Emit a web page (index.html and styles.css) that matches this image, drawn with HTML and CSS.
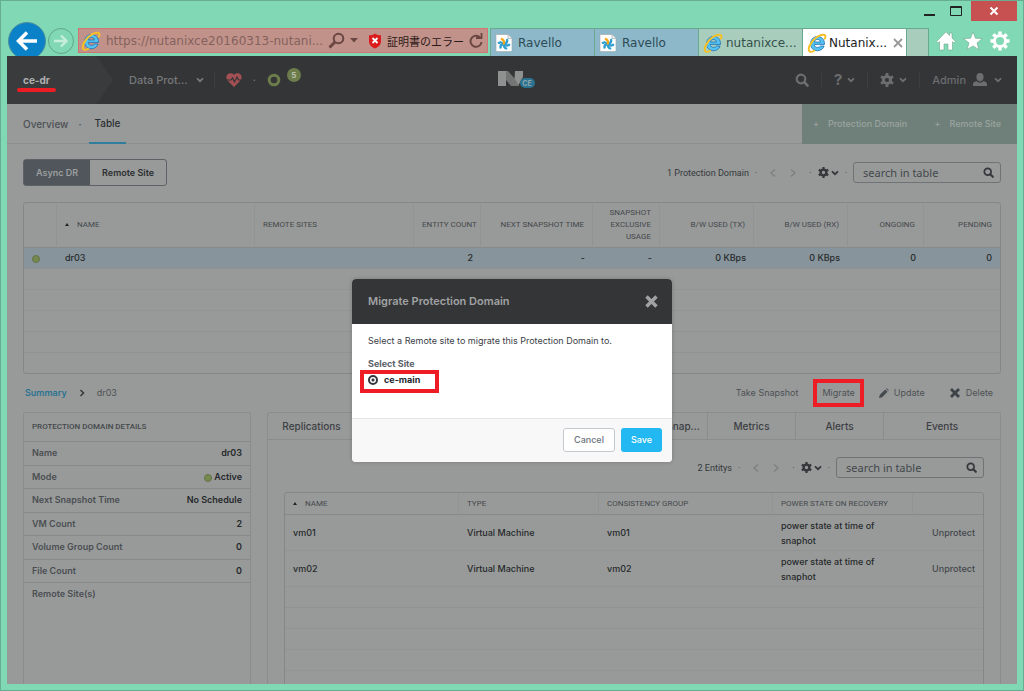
FILE: index.html
```html
<!DOCTYPE html>
<html lang="ja">
<head>
    <meta charset="UTF-8">
    <meta name="viewport" content="width=device-width, initial-scale=1.0">
    <title>Nutanix Web Console</title>
    <link rel="stylesheet" href="styles.css">
</head>
<body>

    <!-- Shared icons -->
    <svg class="sprite" width="0" height="0">
        <symbol id="ie" viewBox="0 0 20 20">
            <path d="M17.500 11.400H7.200c.2 2 1.500 3 3.300 3 1.400 0 2.400-.5 3-1.400h3.600c-.9 2.900-3.400 4.700-6.600 4.700-4 0-7-2.800-7-6.900S6.500 3.500 10.500 3.500c4.300 0 7.200 3.100 7 7.900zM7.300 9h6.300c-.3-1.600-1.400-2.500-3.100-2.500S7.700 7.400 7.300 9z" fill="#55c3f2" stroke="#1c6eb4" stroke-width=".8"/>
            <path d="M2.600 18.400C.4 16.200 3 9.800 8 5.600 12 2.200 17 .6 18.200 2.500c.5.800.2 2-.4 3.100" fill="none" stroke="#f6c026" stroke-width="2" stroke-linecap="round"/>
            <path d="M2.600 18.400c1 .9 3 .3 4.800-.9" fill="none" stroke="#f6c026" stroke-width="1.600" stroke-linecap="round"/>
        </symbol>
        <symbol id="ravello" viewBox="0 0 18 18">
            <path d="M1 .5h12l4 4v13H1z" fill="#fff" stroke="#9aa5a8" stroke-width=".6"/>
            <path d="M13 .5v4h4" fill="#e3e7e8" stroke="#9aa5a8" stroke-width=".6"/>
            <g fill="none" stroke="#2f9fd0" stroke-width="2.300" stroke-linecap="round">
                <path d="M8.500 10C7 8.500 5 8 3.800 9"/>
                <path d="M8.500 10c-2 .3-3.200 1.500-3 3.600"/>
                <path d="M9 10.200c-.3 2 .5 3.600 2.200 4.300"/>
                <path d="M9 10c1.500 1.600 3.600 1.900 5.200.8"/>
                <path d="M9 9.800c2-.3 3.300-1.800 3.200-3.800"/>
            </g>
            <path d="M8.800 9.500C9.300 7.500 8.500 5.800 6.800 5" fill="none" stroke="#f5a81c" stroke-width="2.300" stroke-linecap="round"/>
        </symbol>
        <symbol id="search" viewBox="0 0 14 14">
            <circle cx="6" cy="6" r="4.300" fill="none" stroke="currentColor" stroke-width="2.200"/>
            <path d="M9.200 9.200l3.300 3.300" stroke="currentColor" stroke-width="2.600" stroke-linecap="round"/>
        </symbol>
        <symbol id="gear" viewBox="0 0 14 14">
            <circle cx="7" cy="7" r="3.600" fill="none" stroke="currentColor" stroke-width="3"/>
            <path d="M7 0v2.500M7 11.500V14M1 3.500l2.100 1.200M10.900 9.300l2.100 1.200M1 10.500l2.100-1.200M10.900 4.700L13 3.500" stroke="currentColor" stroke-width="2.800"/>
        </symbol>
        <symbol id="down" viewBox="0 0 8 8">
            <path d="M1.500 2.800L4 5.200l2.500-2.400" fill="none" stroke="currentColor" stroke-width="1.800" stroke-linecap="round"/>
        </symbol>
        <symbol id="cross" viewBox="0 0 12 12">
            <path d="M2 2l8 8M10 2l-8 8" stroke="currentColor" stroke-width="2.800"/>
        </symbol>
        <symbol id="left" viewBox="0 0 8 10">
            <path d="M6 1.500L2 5l4 3.500" fill="none" stroke="currentColor" stroke-width="1.500"/>
        </symbol>
        <symbol id="right" viewBox="0 0 8 10">
            <path d="M2 1.500L6 5 2 8.500" fill="none" stroke="currentColor" stroke-width="1.500"/>
        </symbol>
    </svg>

    <div class="window">

        <!-- Title bar -->
        <div class="titlebar">
            <button class="win-btn" aria-label="Minimize"><svg width="12" height="12"><path d="M0 10h11" stroke="#222" stroke-width="2"/></svg></button>
            <button class="win-btn" aria-label="Maximize"><svg width="13" height="12"><path d="M.5 1.500h11v9H.5zM0 2.500h12" fill="none" stroke="#222"/></svg></button>
            <button class="win-btn win-close" aria-label="Close"><svg width="10" height="10"><path d="M1.500 1.500l7 7M8.500 1.500l-7 7" stroke="#fff" stroke-width="2"/></svg></button>
        </div>

        <!-- Browser bar -->
        <div class="browser">
            <button class="back" aria-label="Back"><svg width="22" height="22"><path d="M21 11H3M11 2.500L2.500 11l8.500 8.500" fill="none" stroke="#fff" stroke-width="3.500"/></svg></button>
            <button class="forward" aria-label="Forward"><svg width="14" height="14"><path d="M0 7h12M7 1.500L12.500 7 7 12.500" fill="none" stroke="#c7eedd" stroke-width="2.400"/></svg></button>
            <div class="address">
                <svg width="20" height="20"><use href="#ie"/></svg>
                <input class="url" type="text" aria-label="Address" value="https://nutanixce20160313-nutani...">
                <svg width="17" height="17" viewBox="0 0 17 17"><circle cx="10.500" cy="6.500" r="4.800" fill="none" stroke="#6a4743" stroke-width="2"/><path d="M7 10l-5.500 5.500" stroke="#6a4743" stroke-width="3"/></svg>
                <svg class="url-drop" width="8" height="5"><path d="M0 0h8L4 4.500z" fill="#6a4743"/></svg>
                <svg width="14" height="16" viewBox="0 0 14 16"><path d="M7 .5c2 1.500 4 1.800 6 1.800V8c0 4-2.500 6-6 7.500C3.500 14 1 12 1 8V2.300c2 0 4-.3 6-1.800z" fill="#dc1c1c"/><path d="M4.500 5l5 5M9.500 5l-5 5" stroke="#fff" stroke-width="1.800"/></svg>
                <span class="cert">証明書のエラー</span>
                <svg width="14" height="16" viewBox="0 0 14 16"><path d="M11 4.500A5.500 5.500 0 1 0 12.500 9" fill="none" stroke="#6a4743" stroke-width="2"/><path d="M7 5h5.500V0" fill="none" stroke="#6a4743" stroke-width="1.800"/></svg>
            </div>
            <div class="tabs">
                <a class="tab tab-blue" href="#"><svg width="18" height="18"><use href="#ravello"/></svg>Ravello</a>
                <a class="tab tab-blue" href="#"><svg width="18" height="18"><use href="#ravello"/></svg>Ravello</a>
                <a class="tab" href="#"><svg width="20" height="20"><use href="#ie"/></svg>nutanixce...</a>
                <a class="tab tab-active" href="#"><svg width="20" height="20"><use href="#ie"/></svg>Nutanix...<svg class="tab-close" width="10" height="10"><path d="M1 1l8 8M9 1L1 9" stroke="#999" stroke-width="1.800"/></svg></a>
                <button class="tab-new" aria-label="New tab"></button>
            </div>
            <div class="browser-tools">
                <button aria-label="Home"><svg width="20" height="20"><path d="M10 .8L.6 10.500l1.500 1.500L3.500 10.700V19H8v-6h4v6h4.500v-8.300l1.400 1.300 1.500-1.500-3.400-3.500V2h-2.500v2.500z" fill="#fff" stroke="#6fa78f" stroke-width=".6"/></svg></button>
                <button aria-label="Favorites"><svg width="20" height="20"><path d="M10 .8l2.500 6.500 6.900.3-5.400 4.300 1.900 6.800L10 14.900l-5.900 3.800L6 11.900.6 7.600l6.900-.3z" fill="#fff" stroke="#6fa78f" stroke-width=".6"/></svg></button>
                <button aria-label="Tools"><svg width="20" height="20"><circle cx="10" cy="10" r="5.500" fill="none" stroke="#fff" stroke-width="3"/><path d="M10 .5V4M10 16v3.500M.5 10H4M16 10h3.500M3.300 3.300l2.500 2.500M14.200 14.200l2.500 2.500M3.300 16.700l2.500-2.500M14.200 5.800l2.500-2.500" stroke="#fff" stroke-width="3.400"/></svg></button>
            </div>
        </div>

        <div class="app">

            <!-- Header -->
            <header class="header">
                <div class="cluster"><span class="cluster-name">ce-dr</span></div>
                <svg class="cluster-arrow" width="16" height="48" viewBox="0 0 16 48"><path d="M0 0l16 24L0 48z" fill="#3a3b3d"/></svg>
                <button class="page-menu">Data Prot...<svg width="8" height="8"><use href="#down"/></svg></button>
                <i class="divider"></i>
                <svg class="heart" width="16" height="14" viewBox="0 0 16 14"><path d="M8 14L1.500 7.500C-2 3 3-2.500 8 1.800 13-2.500 18 3 14.500 7.500z" fill="#a35054"/><path d="M0 7h5l1.500-2 2 4 2.500-5 1.500 3H16" fill="none" stroke="#343537" stroke-width="1.200"/></svg>
                <span class="dot">·</span>
                <svg class="ring" width="14" height="14"><circle cx="7" cy="7" r="4.800" fill="none" stroke="#6c7d4b" stroke-width="3"/></svg>
                <span class="badge">5</span>
                <div class="logo">
                    <svg width="38" height="18" viewBox="0 0 38 18">
                        <path d="M17 0h8v6l-5 9h-4z" fill="#8f9190"/>
                        <path d="M8 0h2l7 8 4 7h-8L8 9z" fill="#737574"/>
                        <path d="M0 0h8v15H0z" fill="#8f9190"/>
                        <rect x="22" y="7" width="15" height="10" rx="5" fill="#2a7390"/>
                        <text x="29" y="15" text-anchor="middle" class="logo-text">CE</text>
                    </svg>
                </div>
                <div class="header-right">
                    <button aria-label="Search"><svg width="14" height="14"><use href="#search"/></svg></button>
                    <i class="divider"></i>
                    <button class="help" aria-label="Help"><b>?</b><svg width="8" height="8"><use href="#down"/></svg></button>
                    <i class="divider"></i>
                    <button aria-label="Settings"><svg width="14" height="14"><use href="#gear"/></svg><svg width="8" height="8"><use href="#down"/></svg></button>
                    <i class="divider"></i>
                    <button class="admin">Admin<svg width="14" height="14"><path d="M7 0c2.300 0 3.600 1.600 3.600 3.900S9.400 8.400 7 8.400 3.400 6.200 3.400 3.900 4.700 0 7 0zM0 13V11c0-2 2-2.500 3.600-3C5 10 9 10 10.400 8c1.600.5 3.600 1 3.600 3v2z" fill="currentColor"/></svg><svg width="8" height="8"><use href="#down"/></svg></button>
                </div>
            </header>

            <!-- Sub navigation -->
            <nav class="subnav">
                <a href="#">Overview</a>
                <span class="dot">·</span>
                <a class="current" href="#">Table</a>
                <div class="create">
                    <button>+<span>Protection Domain</span></button>
                    <button>+<span>Remote Site</span></button>
                </div>
            </nav>

            <main class="content">
                <div class="toolbar">
                    <div class="switch">
                        <button class="on">Async DR</button><button>Remote Site</button>
                    </div>
                    <div class="pager">
                        <span>1 Protection Domain</span><span class="dot">·</span>
                        <button class="step" aria-label="Previous"><svg width="8" height="10"><use href="#left"/></svg></button>
                        <button class="step" aria-label="Next"><svg width="8" height="10"><use href="#right"/></svg></button>
                        <span class="dot">·</span>
                        <button class="options" aria-label="Options"><svg width="11" height="11"><use href="#gear"/></svg><svg width="8" height="8"><use href="#down"/></svg></button>
                        <span class="dot">·</span>
                    </div>
                    <label class="search"><input type="text" aria-label="Search" placeholder="search in table"><svg width="11" height="11"><use href="#search"/></svg></label>
                </div>

                <div class="table-box">
                    <table class="domains">
                        <colgroup><col class="w-dot"><col><col class="w-sites"><col class="w-count"><col class="w-next"><col class="w-count"><col class="w-bw"><col class="w-bw"><col class="w-num"><col class="w-num"></colgroup>
                        <thead>
                            <tr><th></th><th class="l"><i class="sort"></i>NAME</th><th class="l">REMOTE SITES</th><th>ENTITY&nbsp;COUNT</th><th>NEXT SNAPSHOT TIME</th><th>SNAPSHOT EXCLUSIVE USAGE</th><th>B/W USED (TX)</th><th>B/W USED (RX)</th><th>ONGOING</th><th>PENDING</th></tr>
                        </thead>
                        <tbody>
                            <tr class="selected"><td class="l"><i class="status"></i></td><td class="l">dr03</td><td></td><td>2</td><td>-</td><td>-</td><td>0 KBps</td><td>0 KBps</td><td>0</td><td>0</td></tr>
                            <tr><td colspan="10"></td></tr>
                            <tr><td colspan="10"></td></tr>
                            <tr><td colspan="10"></td></tr>
                            <tr><td colspan="10"></td></tr>
                            <tr><td colspan="10"></td></tr>
                        </tbody>
                    </table>
                </div>

                <div class="actions">
                    <a class="summary" href="#">Summary</a>
                    <svg width="6" height="8" viewBox="0 0 6 8"><path d="M1.500 1L4.500 4l-3 3" fill="none" stroke="#34383b" stroke-width="1.500"/></svg>
                    <span class="crumb">dr03</span>
                    <button>Take Snapshot</button>
                    <button class="marked">Migrate</button>
                    <button><svg width="10" height="10"><path d="M0 10l.8-3.200L6.200 1.400l2.400 2.400L3.200 9.200zM7 .7c1-1 3.300 1.300 2.400 2.400z" fill="#454b4f"/></svg>Update</button>
                    <button><svg class="dark" width="12" height="12"><use href="#cross"/></svg>Delete</button>
                </div>

                <div class="panels">
                    <section class="details">
                        <h2>PROTECTION DOMAIN DETAILS</h2>
                        <dl>
                            <div><dt>Name</dt><dd>dr03</dd></div>
                            <div><dt>Mode</dt><dd><i class="status"></i> Active</dd></div>
                            <div><dt>Next Snapshot Time</dt><dd>No Schedule</dd></div>
                            <div><dt>VM Count</dt><dd>2</dd></div>
                            <div><dt>Volume Group Count</dt><dd>0</dd></div>
                            <div><dt>File Count</dt><dd>0</dd></div>
                            <div><dt>Remote Site(s)</dt><dd></dd></div>
                        </dl>
                    </section>

                    <section class="entities">
                        <nav class="inner-tabs">
                            <a href="#">Replications</a><a href="#">Entities</a><a href="#">Schedules</a><a href="#">Local Snap...</a><a href="#">Remote Snap...</a><a href="#">Metrics</a><a href="#">Alerts</a><a class="last" href="#">Events</a>
                        </nav>
                        <div class="inner">
                            <div class="toolbar">
                                <div class="pager">
                                    <span>2 Entitys</span><span class="dot">·</span>
                                    <button class="step" aria-label="Previous"><svg width="8" height="10"><use href="#left"/></svg></button>
                                    <button class="step" aria-label="Next"><svg width="8" height="10"><use href="#right"/></svg></button>
                                    <span class="dot">·</span>
                                    <button class="options" aria-label="Options"><svg width="11" height="11"><use href="#gear"/></svg><svg width="8" height="8"><use href="#down"/></svg></button>
                                    <span class="dot">·</span>
                                </div>
                                <label class="search"><input type="text" aria-label="Search entities" placeholder="search in table"><svg width="11" height="11"><use href="#search"/></svg></label>
                            </div>
                            <div class="table-box">
                                <table class="vms">
                                    <colgroup><col><col class="w-type"><col class="w-group"><col class="w-power"><col class="w-act"></colgroup>
                                    <thead>
                                        <tr><th><i class="sort"></i>NAME</th><th>TYPE</th><th>CONSISTENCY GROUP</th><th>POWER STATE ON RECOVERY</th><th></th></tr>
                                    </thead>
                                    <tbody>
                                        <tr class="vm"><td>vm01</td><td>Virtual Machine</td><td>vm01</td><td class="power">power state at time of snaphot</td><td class="act"><a href="#">Unprotect</a></td></tr>
                                        <tr class="vm"><td>vm02</td><td>Virtual Machine</td><td>vm02</td><td class="power">power state at time of snaphot</td><td class="act"><a href="#">Unprotect</a></td></tr>
                                        <tr><td colspan="5"></td></tr>
                                        <tr><td colspan="5"></td></tr>
                                        <tr><td colspan="5"></td></tr>
                                        <tr><td colspan="5"></td></tr>
                                        <tr><td colspan="5"></td></tr>
                                    </tbody>
                                </table>
                            </div>
                        </div>
                    </section>
                </div>
            </main>

            <!-- Migrate dialog -->
            <div class="overlay">
                <form class="modal" role="dialog" aria-labelledby="modalTitle">
                    <div class="modal-head">
                        <h1 id="modalTitle">Migrate Protection Domain</h1>
                        <button type="button" aria-label="Close"><svg width="15" height="15"><use href="#cross"/></svg></button>
                    </div>
                    <div class="modal-body">
                        <p>Select a Remote site to migrate this Protection Domain to.</p>
                        <h3>Select Site</h3>
                        <div class="site">
                            <input type="radio" id="site" name="site" checked>
                            <label for="site">ce-main</label>
                        </div>
                    </div>
                    <div class="modal-foot">
                        <button type="button" class="cancel">Cancel</button>
                        <button type="button" class="save">Save</button>
                    </div>
                </form>
            </div>
        </div>
    </div>

</body>
</html>
```
FILE: styles.css
```css
* {
    margin: 0;
    padding: 0;
    box-sizing: border-box;
}

body {
    font-family: Inter, "Noto Sans CJK JP", sans-serif;
    font-size: 9px;
    line-height: 12px;
    color: #34383b;
}

button, input {
    font: inherit;
    color: inherit;
    background: none;
    border: none;
}

button {
    display: flex;
    align-items: center;
    cursor: pointer;
}

a {
    color: inherit;
    text-decoration: none;
}

svg {
    flex-shrink: 0;
}

.sprite {
    position: absolute;
}

/* Browser window */
.window {
    display: flex;
    flex-direction: column;
    height: 100vh;
    overflow: hidden;
    background-color: #80d8b4;
    border: 1px solid #67ad91;
    padding: 0 6px 6px;
}

.titlebar {
    display: flex;
    justify-content: flex-end;
    height: 27px;
}

.win-btn {
    width: 26px;
    height: 20px;
    justify-content: center;
}

.win-close {
    width: 46px;
    margin-left: 2px;
    background-color: #c75050;
}

.browser {
    display: flex;
    height: 28px;
    font-family: "DejaVu Sans", "Noto Sans CJK JP", sans-serif;
    font-size: 12px;
    line-height: 16px;
}

.back {
    flex-shrink: 0;
    justify-content: center;
    width: 38px;
    height: 38px;
    margin: -6px 2px 0 1px;
    border-radius: 50%;
    border: 1px solid #4d8f9f;
    background-color: #0b82c8;
}

.forward {
    flex-shrink: 0;
    justify-content: center;
    width: 26px;
    height: 26px;
    margin-right: 4px;
    border-radius: 50%;
    border: 1px solid #62a78b;
}

.address {
    flex: 1;
    display: flex;
    align-items: center;
    gap: 5px;
    height: 25px;
    padding: 0 4px 0 2px;
    margin-right: 2px;
    border: 1px solid #d07573;
    background-color: #c1928a;
}

.url {
    flex: 1;
    min-width: 0;
    color: #84625d;
}

.url-drop {
    margin-right: 5px;
}

.cert {
    font-family: "Noto Sans CJK JP", sans-serif;
    font-size: 11px;
    color: #2d1a18;
    white-space: nowrap;
}

.tabs {
    display: flex;
    border-top: 1px solid #69a98f;
    border-left: 1px solid #69a98f;
}

.tab {
    display: flex;
    align-items: center;
    gap: 3px;
    width: 104px;
    padding-left: 4px;
    border-right: 1px solid #69a98f;
    background-color: #a9cdbd;
    color: #35504a;
    white-space: nowrap;
}

.tab-blue {
    gap: 5px;
    background-color: #8cb8c9;
    color: #2e4a55;
}

.tab-active {
    gap: 2px;
    background-color: #fff;
    color: #222;
}

.tab-close {
    margin-left: 4px;
}

.tab-new {
    width: 22px;
    background-color: #a9cdbd;
    border-right: 1px solid #69a98f;
}

.browser-tools {
    display: flex;
    align-items: center;
    gap: 7px;
    padding: 0 7px 2px 7px;
}

/* App */
.app {
    position: relative;
    flex: 1;
    display: flex;
    flex-direction: column;
    min-height: 0;
    overflow: hidden;
    background-color: #989a99;
}

.header {
    display: flex;
    align-items: center;
    flex-shrink: 0;
    height: 48px;
    background-color: #343537;
    color: #77797b;
    font-size: 11px;
}

.cluster {
    display: flex;
    align-items: center;
    width: 90px;
    height: 48px;
    padding-left: 16px;
    background-color: #3a3b3d;
    color: #b0b1b2;
    font-size: 10px;
    font-weight: bold;
}

.cluster-name {
    position: relative;
}

/* Red marker under the cluster name */
.cluster-name::after {
    content: "";
    position: absolute;
    left: -6px;
    right: -6px;
    top: 14px;
    height: 4px;
    border-radius: 2px;
    background-color: #ee1c25;
}

.page-menu {
    gap: 8px;
    margin: 0 10px 0 16px;
    font-weight: 500;
}

.divider {
    width: 1px;
    height: 16px;
    background-color: #3d3e40;
}

.heart {
    margin: 0 11px;
}

.ring {
    margin-left: 11px;
}

.badge {
    width: 14px;
    height: 14px;
    margin: -10px 0 0 6px;
    border-radius: 50%;
    background-color: #6c7d4b;
    color: #b8bdad;
    font-size: 8px;
    font-weight: bold;
    line-height: 14px;
    text-align: center;
}

.logo {
    flex: 1;
    display: flex;
    padding-left: 197px;
}

.logo-text {
    font-size: 7px;
    font-weight: bold;
    fill: #8fa5ad;
}

.header-right {
    display: flex;
    align-items: center;
    gap: 12px;
    padding-right: 15px;
}

.header-right button {
    gap: 5px;
    color: #6c6e70;
}

.header-right .admin {
    gap: 7px;
    font-weight: 500;
}

.help b {
    font-size: 15px;
}

.subnav {
    display: flex;
    flex-shrink: 0;
    align-items: center;
    height: 40px;
    padding-left: 16px;
    border-bottom: 1px solid #8d8f8e;
    font-size: 10px;
    font-weight: 500;
    color: #4d5155;
}

.subnav > .dot {
    margin: 0 8px 0 10px;
}

.current {
    padding: 0 5px;
    line-height: 38px;
    border-bottom: 2px solid #2f7e9d;
    color: #2c2f32;
}

.create {
    display: flex;
    align-items: center;
    justify-content: space-between;
    width: 215px;
    height: 40px;
    margin-left: auto;
    padding: 0 16px 0 11px;
    background-color: #6f7f79;
    color: #9aa5a0;
    font-size: 9px;
}

.create button {
    gap: 9px;
}

.content {
    flex: 1;
    display: flex;
    flex-direction: column;
    min-height: 0;
    padding: 15px 16px 0;
}

.toolbar {
    display: flex;
    align-items: center;
}

.switch {
    display: flex;
    border: 1px solid #5d6267;
    border-radius: 3px;
}

.switch button {
    height: 25px;
    padding: 0 12px;
    font-weight: 600;
    color: #2c2f32;
}

.switch .on {
    background-color: #50565b;
    color: #9b9e9f;
}

.pager {
    display: flex;
    align-items: center;
    margin-left: auto;
    font-family: Roboto, sans-serif;
    color: #34383b;
}

.pager .dot {
    margin: 0 6px;
}

.step {
    padding: 0 6px;
    color: #7e8183;
}

.options {
    gap: 2px;
}

.search {
    display: flex;
    align-items: center;
    width: 148px;
    height: 21px;
    padding: 0 6px 0 9px;
    border: 1px solid #6f7375;
    border-radius: 3px;
    font-family: "Noto Sans", sans-serif;
    font-size: 11px;
}

.search input {
    flex: 1;
    min-width: 0;
}

.search input::placeholder {
    color: #43484c;
}

/* Tables */
.table-box {
    flex-shrink: 0;
    border: 1px solid #84878a;
    border-radius: 3px;
    overflow: hidden;
}

.content > .table-box {
    margin-top: 16px;
}

table {
    width: 100%;
    table-layout: fixed;
    border-spacing: 0;
}

th {
    padding: 0 8px;
    border-right: 1px solid #929493;
    border-bottom: 1px solid #868988;
    font-family: Roboto, sans-serif;
    font-size: 8px;
    font-weight: normal;
    color: #44484c;
}

th:last-child {
    border-right: none;
}

td {
    height: 21px;
    padding: 0 8px;
    border-bottom: 1px solid #929493;
    font-weight: 500;
    color: #26292b;
}

tr:last-child td {
    border-bottom: none;
}

.domains th {
    height: 45px;
    text-align: right;
}

.domains td {
    text-align: right;
}

.domains tr:last-child td {
    height: 20px;
}

.domains .l {
    text-align: left;
}

.domains .selected td {
    background-color: #87949b;
}

.w-dot { width: 33px; }
.w-sites { width: 159px; }
.w-count { width: 67px; }
.w-next { width: 112px; }
.w-bw { width: 94px; }
.w-num { width: 76px; }

.sort {
    display: inline-block;
    margin-right: 8px;
    border: 2px solid transparent;
    border-top: none;
    border-bottom: 3px solid #222;
    vertical-align: middle;
}

.status {
    display: inline-block;
    width: 8px;
    height: 8px;
    border: 1px solid #65744a;
    border-radius: 50%;
    background-color: #75894c;
    vertical-align: middle;
}

.actions {
    display: flex;
    align-items: center;
    flex-shrink: 0;
    height: 38px;
    padding: 0 8px 0 2px;
    gap: 12px;
    color: #4d5155;
}

.summary {
    color: #2a7391;
    font-weight: 600;
}

.crumb {
    margin-right: auto;
}

.actions button {
    gap: 5px;
    height: 20px;
    margin-left: 12px;
}

.dark {
    color: #3c4247;
}

.marked {
    position: relative;
}

/* Red marker around the Migrate action */
.marked::after {
    content: "";
    position: absolute;
    inset: -4px -9px;
    border: 4px solid #ee1c25;
}

/* Lower panels */
.panels {
    flex: 1;
    display: flex;
    gap: 16px;
    min-height: 0;
}

.details, .entities {
    border: 1px solid #8a8d8c;
    border-bottom: none;
    border-radius: 3px 3px 0 0;
}

.details {
    width: 228px;
}

.details h2 {
    padding: 8px;
    font-family: Roboto, sans-serif;
    font-size: 8px;
    font-weight: 500;
    color: #44484c;
}

.details dl > div {
    display: flex;
    justify-content: space-between;
    height: 24px;
    padding: 5px 8px;
    border-top: 1px solid #868988;
    font-weight: 600;
}

.details dl > div:nth-child(even) {
    height: 23px;
}

.details dt {
    color: #4b4f53;
}

.details dd {
    color: #26292b;
}

.entities {
    flex: 1;
    min-width: 0;
}

.inner-tabs {
    display: flex;
    border-bottom: 1px solid #8a8d8c;
    color: #3c4044;
    font-size: 10px;
    font-weight: 500;
    line-height: 26px;
}

.inner-tabs a {
    width: 88px;
    border-right: 1px solid #8a8d8c;
    text-align: center;
    white-space: nowrap;
}

.inner-tabs .last {
    flex: 1;
    border-right: none;
}

.inner {
    padding: 17px 16px 0;
}

.inner .table-box {
    margin-top: 14px;
}

.vms th {
    height: 22px;
    text-align: left;
}

.vm td {
    height: 36px;
}

.vms .power {
    padding-right: 30px;
    line-height: 15px;
}

.vms .act {
    text-align: right;
    color: #43474b;
}

.w-type { width: 140px; }
.w-group { width: 174px; }
.w-power { width: 140px; }
.w-act { width: 70px; }

/* Dialog */
.overlay {
    position: absolute;
    inset: 0;
    display: flex;
    align-items: center;
    justify-content: center;
}

.modal {
    width: 320px;
    border-radius: 4px;
    overflow: hidden;
    background-color: #fff;
    box-shadow: 0 0 4px rgba(0, 0, 0, 0.2);
}

.modal-head {
    display: flex;
    align-items: center;
    justify-content: space-between;
    height: 45px;
    padding: 0 13px 0 16px;
    background-color: #343537;
    color: #a0a2a3;
}

.modal-head h1 {
    font-size: 11px;
    font-weight: 600;
}

.modal-body {
    height: 94px;
    padding: 11px 16px 0;
    color: #3b4046;
}

.modal-body h3 {
    margin-top: 11px;
    font-size: 9px;
    color: #59616a;
}

.site {
    position: relative;
    display: flex;
    align-items: center;
    gap: 6px;
    width: 60px;
    margin-top: 4px;
    font-weight: bold;
    color: #22272b;
}

/* Red marker around the chosen site */
.site::after {
    content: "";
    position: absolute;
    inset: -4px -11px -7px -8px;
    border: 4px solid #ee1c25;
    pointer-events: none;
}

.site input {
    appearance: none;
    width: 10px;
    height: 10px;
    border: 2px solid #33383c;
    border-radius: 50%;
    background: radial-gradient(#33383c 1px, #fff 2px);
}

.modal-foot {
    display: flex;
    align-items: center;
    justify-content: flex-end;
    gap: 6px;
    height: 44px;
    padding: 0 10px;
    border-top: 1px solid #e6e6e6;
    background-color: #f8f8f8;
}

.modal-foot button {
    height: 24px;
    padding: 0 10px;
    border-radius: 3px;
    font-weight: 500;
}

.modal-foot .cancel {
    border: 1px solid #c5cacf;
    background-color: #fff;
    color: #6b737b;
}

.modal-foot .save {
    background-color: #22b8f1;
    color: #fff;
}
```
